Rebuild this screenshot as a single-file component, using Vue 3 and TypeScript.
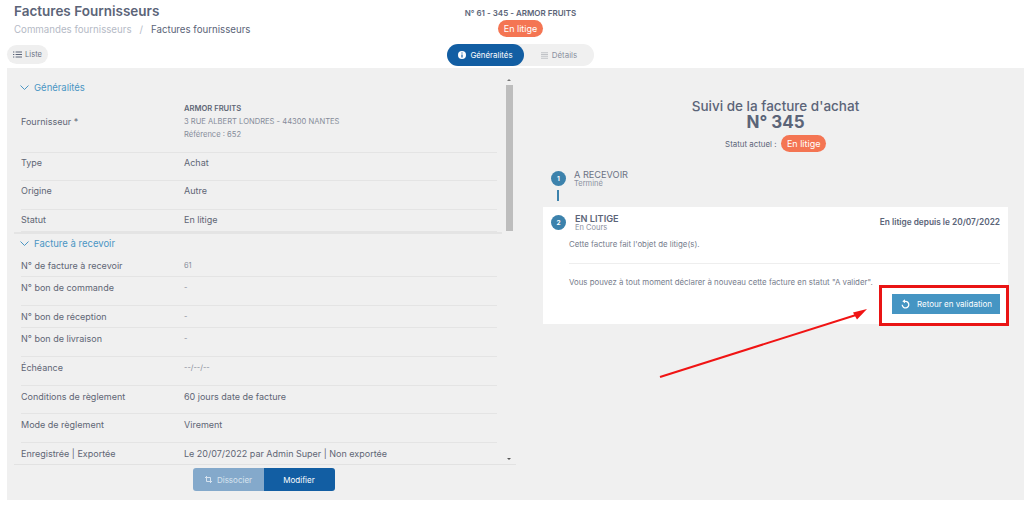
<script setup lang="ts">
interface Row { label: string; value: string; h: number; small?: boolean }
const general: Row[] = [
  { label: 'Type', value: 'Achat', h: 28 },
  { label: 'Origine', value: 'Autre', h: 29 },
  { label: 'Statut', value: 'En litige', h: 22 },
]
const invoice: Row[] = [
  { label: 'N° de facture à recevoir', value: '61', h: 22, small: true },
  { label: 'N° bon de commande', value: '-', h: 29, small: true },
  { label: 'N° bon de réception', value: '-', h: 22, small: true },
  { label: 'N° bon de livraison', value: '-', h: 29, small: true },
  { label: 'Échéance', value: '--/--/--', h: 29, small: true },
  { label: 'Conditions de règlement', value: '60 jours date de facture', h: 28 },
  { label: 'Mode de règlement', value: 'Virement', h: 29 },
  { label: 'Enregistrée | Exportée', value: 'Le 20/07/2022 par Admin Super | Non exportée', h: 21 },
]
</script>

<template>
  <div class="page">
    <header class="head">
      <div class="head-left">
        <h1>Factures Fournisseurs</h1>
        <div class="crumbs"><span class="c1">Commandes fournisseurs</span><span class="c1 sep">/</span><span>Factures fournisseurs</span></div>
        <button class="list-btn">
          <svg width="9" height="7" viewBox="0 0 9 7"><path d="M0 1h1.300M2.600 1h6.400M0 3.500h1.300M2.600 3.500h6.400M0 6h1.300M2.600 6h6.400" stroke="#5b6478" fill="none"/></svg>
          Liste
        </button>
      </div>
      <div class="head-center">
        <div class="ref">N° 61 - 345 - ARMOR FRUITS</div>
        <span class="pill">En litige</span>
        <div class="tabs">
          <div class="tab on">
            <svg width="8" height="8" viewBox="0 0 8 8"><circle cx="4" cy="4" r="4" fill="#fff"/><path d="M4 3.400v3M4 1.500v1" stroke="#125ea3" stroke-width="1.200"/></svg>
            Généralités
          </div>
          <div class="tab">
            <svg width="7" height="7" viewBox="0 0 7 7"><path d="M0 .7h7M0 2.500h7M0 4.300h7M0 6.200h7" stroke="#c0c2c6" stroke-width="1.100"/></svg>
            Détails
          </div>
        </div>
      </div>
    </header>

    <main class="panel">
      <section class="left">
        <div class="scroll">
          <div class="content">
            <div class="sec first">
              <svg class="chev" width="9" height="5" viewBox="0 0 9 5"><path d="M.5.5l4 4 4-4" stroke="#4b96c4" fill="none"/></svg>
              Généralités
            </div>
            <div class="row supplier">
              <div class="lab">Fournisseur *</div>
              <div class="val sup">
                <b>ARMOR FRUITS</b>
                <span>3 RUE ALBERT LONDRES - 44300 NANTES</span>
                <span>Référence : 652</span>
              </div>
            </div>
            <div v-for="r in general" :key="r.label" class="row gen" :style="{ height: r.h + 'px' }">
              <div class="lab">{{ r.label }}</div>
              <div class="val">{{ r.value }}</div>
            </div>
            <div class="sec second">
              <svg class="chev" width="9" height="5" viewBox="0 0 9 5"><path d="M.5.5l4 4 4-4" stroke="#4b96c4" fill="none"/></svg>
              Facture à recevoir
            </div>
            <div v-for="r in invoice" :key="r.label" class="row" :style="{ height: r.h + 'px' }">
              <div class="lab">{{ r.label }}</div>
              <div class="val" :class="{ small: r.small }">{{ r.value }}</div>
            </div>
          </div>
          <div class="bar"><i class="up"></i><i class="thumb"></i><i class="down"></i></div>
        </div>
        <div class="actions">
          <button class="act light">
            <svg width="9" height="9" viewBox="0 0 9 9"><path d="M1 2.500h5.500V8M2.500 1v5.500H8" stroke="#d5e2ef" fill="none"/></svg>
            Dissocier
          </button>
          <button class="act dark">Modifier</button>
        </div>
      </section>

      <section class="right">
        <div class="track">
          <h2>Suivi de la facture d'achat</h2>
          <div class="num">N° 345</div>
          <div class="status"><span>Statut actuel :</span><span class="pill">En litige</span></div>
        </div>
        <div class="step">
          <span class="dot">1</span>
          <div><div class="st">A RECEVOIR</div><div class="ss">Terminé</div></div>
        </div>
        <div class="line"></div>
        <div class="card">
          <div class="card-head">
            <span class="dot">2</span>
            <div class="titles"><div class="st strong">EN LITIGE</div><div class="ss">En Cours</div></div>
            <div class="since">En litige depuis le 20/07/2022</div>
          </div>
          <div class="body">
            <p class="p1">Cette facture fait l'objet de litige(s).</p>
            <p class="p2">Vous pouvez à tout moment déclarer à nouveau cette facture en statut "A valider".</p>
            <div class="btn-row">
              <button class="back">
                <svg width="9" height="10" viewBox="0 0 9 10"><path d="M3.200 2.600A3.300 3.300 0 1 1 1.200 5.800" stroke="#fff" stroke-width="1.300" fill="none"/><path d="M4 .3v4L1.300 2.300z" fill="#fff"/></svg>
                Retour en validation
              </button>
            </div>
          </div>
        </div>
      </section>
    </main>

    <div class="note-box"></div>
    <svg class="note-arrow" width="220" height="80" viewBox="0 0 220 80">
      <path d="M1 74L197 12" stroke="#f01414" stroke-width="2" fill="none"/>
      <path d="M208 6L194 9.500L198 16.500z" fill="#f01414"/>
    </svg>
  </div>
</template>

<style>
html, body { margin: 0; background: #fff; }
</style>

<style scoped>
* { box-sizing: border-box; }
.page { position: relative; width: 1024px; height: 505px; overflow: hidden; font-family: Inter, "Open Sans", sans-serif; color: #5b6478; background: #fff; }
.head { height: 68px; position: relative; display: flex; }
.head-left { padding: 1px 0 0 7px; }
h1 { margin: 0 0 0 7px; font-size: 13.500px; line-height: 20px; font-weight: 600; color: #5b6478; white-space: nowrap; }
.crumbs { margin: 2px 0 0 7px; font-size: 9.700px; line-height: 14px; display: flex; color: #5b6478; }
.c1 { color: #b5bac6; }
.sep { margin: 0 8px; }
.list-btn { margin-top: 8px; width: 41px; height: 19px; border: 0; border-radius: 10px; background: #efefef; color: #6b7284; font: 400 7.500px Inter, sans-serif; display: flex; align-items: center; justify-content: center; gap: 3px; padding: 0; }
.head-center { position: absolute; left: 447px; width: 147px; top: 7px; display: flex; flex-direction: column; align-items: center; }
.ref { font-size: 8px; line-height: 12px; font-weight: 600; color: #5b6478; white-space: nowrap; }
.pill { display: inline-block; background: #f47553; color: #fff; border-radius: 9px; font-size: 9px; font-weight: 400; line-height: 17px; padding: 0 5.500px; }
.head-center .pill { margin-top: 1px; }
.tabs { margin-top: 7px; width: 147px; height: 22px; background: #f0f0f0; border-radius: 11px; display: flex; }
.tab { width: 70px; display: flex; align-items: center; justify-content: center; gap: 4px; font-size: 7.900px; font-weight: 400; color: #8b90a0; border-radius: 11px; }
.tab.on { width: 77px; background: #125ea3; color: #fff; }
.panel { margin-left: 7px; height: 432px; background: #f0f0f0; display: flex; }
.left { width: 509px; flex: none; display: flex; flex-direction: column; }
.scroll { height: 397px; display: flex; margin-left: 7px; border-bottom: 1px solid #e2e2e2; }
.content { width: 488px; }
.sec { display: flex; align-items: center; gap: 5px; color: #4b96c4; font-size: 9.500px; font-weight: 400; padding-left: 6px; }
.sec.first { height: 32px; padding-top: 6px; }
.sec.second { height: 23px; padding-bottom: 3px; border-top: 2px solid #e4e4e4; }
.row { margin-left: 7px; width: 476px; display: flex; align-items: flex-start; padding-top: 5px; border-bottom: 1px solid #e4e4e4; font-size: 9px; line-height: 12px; font-weight: 400; color: #5f6675; }
.row.gen { padding-top: 4px; }
.row:last-child { border-bottom: 0; }
.row.gen:nth-last-child(-n+1) { border-bottom: 0; }
.supplier { height: 53px; padding-top: 16px; }
.lab { width: 163px; flex: none; white-space: nowrap; }
.val { white-space: nowrap; }
.val.small { font-size: 7.400px; color: #868c9a; }
.sup { display: flex; flex-direction: column; font-size: 7.600px; line-height: 13px; color: #868c9a; margin-top: -14px; }
.sup b { color: #5f6675; font-weight: 600; }
.bar { width: 8px; margin-left: 3px; position: relative; display: flex; flex-direction: column; align-items: center; padding-top: 13px; }
.thumb { width: 7px; height: 146px; background: #bdbdbd; margin-top: 4px; }
.up, .down { position: absolute; left: 2px; width: 0; height: 0; border: 2px solid transparent; }
.up { top: 11px; border-bottom-color: #777; border-top: 0; }
.down { bottom: 4px; border-top-color: #555; border-bottom: 0; }
.actions { display: flex; justify-content: center; margin: 3px 0 0 4px; }
.act { width: 71px; height: 23px; border: 0; font: 400 8px Inter, sans-serif; color: #fff; display: flex; align-items: center; justify-content: center; gap: 4px; padding: 0; }
.light { background: #84a9cb; color: #d8e4ef; border-radius: 3px 0 0 3px; }
.dark { background: #125ea3; border-radius: 0 3px 3px 0; }
.right { flex: 1; padding-left: 27px; }
.track { width: 465px; padding-top: 30px; display: flex; flex-direction: column; align-items: center; }
h2 { margin: 0; font-size: 13.500px; line-height: 16px; font-weight: 500; color: #5b6478; }
.num { font-size: 17px; line-height: 17px; font-weight: 700; color: #5b6478; }
.status { display: flex; align-items: center; gap: 5px; margin-top: 4px; font-size: 7.900px; font-weight: 400; }
.step { margin: 18px 0 0 8px; display: flex; gap: 8px; align-items: flex-start; }
.dot { width: 15px; height: 15px; border-radius: 50%; background: #3c82ac; color: #fff; font-size: 6.500px; font-weight: 700; display: flex; align-items: center; justify-content: center; flex: none; margin-top: 1px; }
.st { font-size: 9.200px; line-height: 10px; color: #6b7284; }
.st.strong { font-weight: 600; color: #5b6478; }
.ss { font-size: 7.500px; line-height: 8px; color: #8b90a0; }
.line { width: 2px; height: 11px; background: #3c82ac; margin: 2px 0 0 14px; }
.card { margin-top: 6px; width: 465px; height: 117px; background: #fff; padding: 7px 8px 0 8px; }
.card-head { display: flex; align-items: flex-start; height: 20px; }
.card-head .dot { margin-top: 1px; }
.titles { margin-left: 9px; }
.since { margin-left: auto; font-size: 8.300px; font-weight: 600; line-height: 17px; }
.body { margin-left: 18px; }
.p1, .p2 { margin: 0; font-size: 7.850px; line-height: 10px; color: #767c8c; white-space: nowrap; }
.p1 { margin-top: 5px; padding-bottom: 14px; border-bottom: 1px solid #eee; }
.p2 { margin-top: 13px; }
.btn-row { display: flex; justify-content: flex-end; margin-top: 7px; }
.back { width: 108px; height: 20px; background: #4595c3; border: 0; color: #fff; font: 400 8px Inter, sans-serif; display: flex; align-items: center; gap: 7px; padding: 0 0 0 9px; }
.note-box { position: absolute; left: 879px; top: 285px; width: 130px; height: 41px; border: 3px solid #e91414; }
.note-arrow { position: absolute; left: 659px; top: 303px; }
</style>
